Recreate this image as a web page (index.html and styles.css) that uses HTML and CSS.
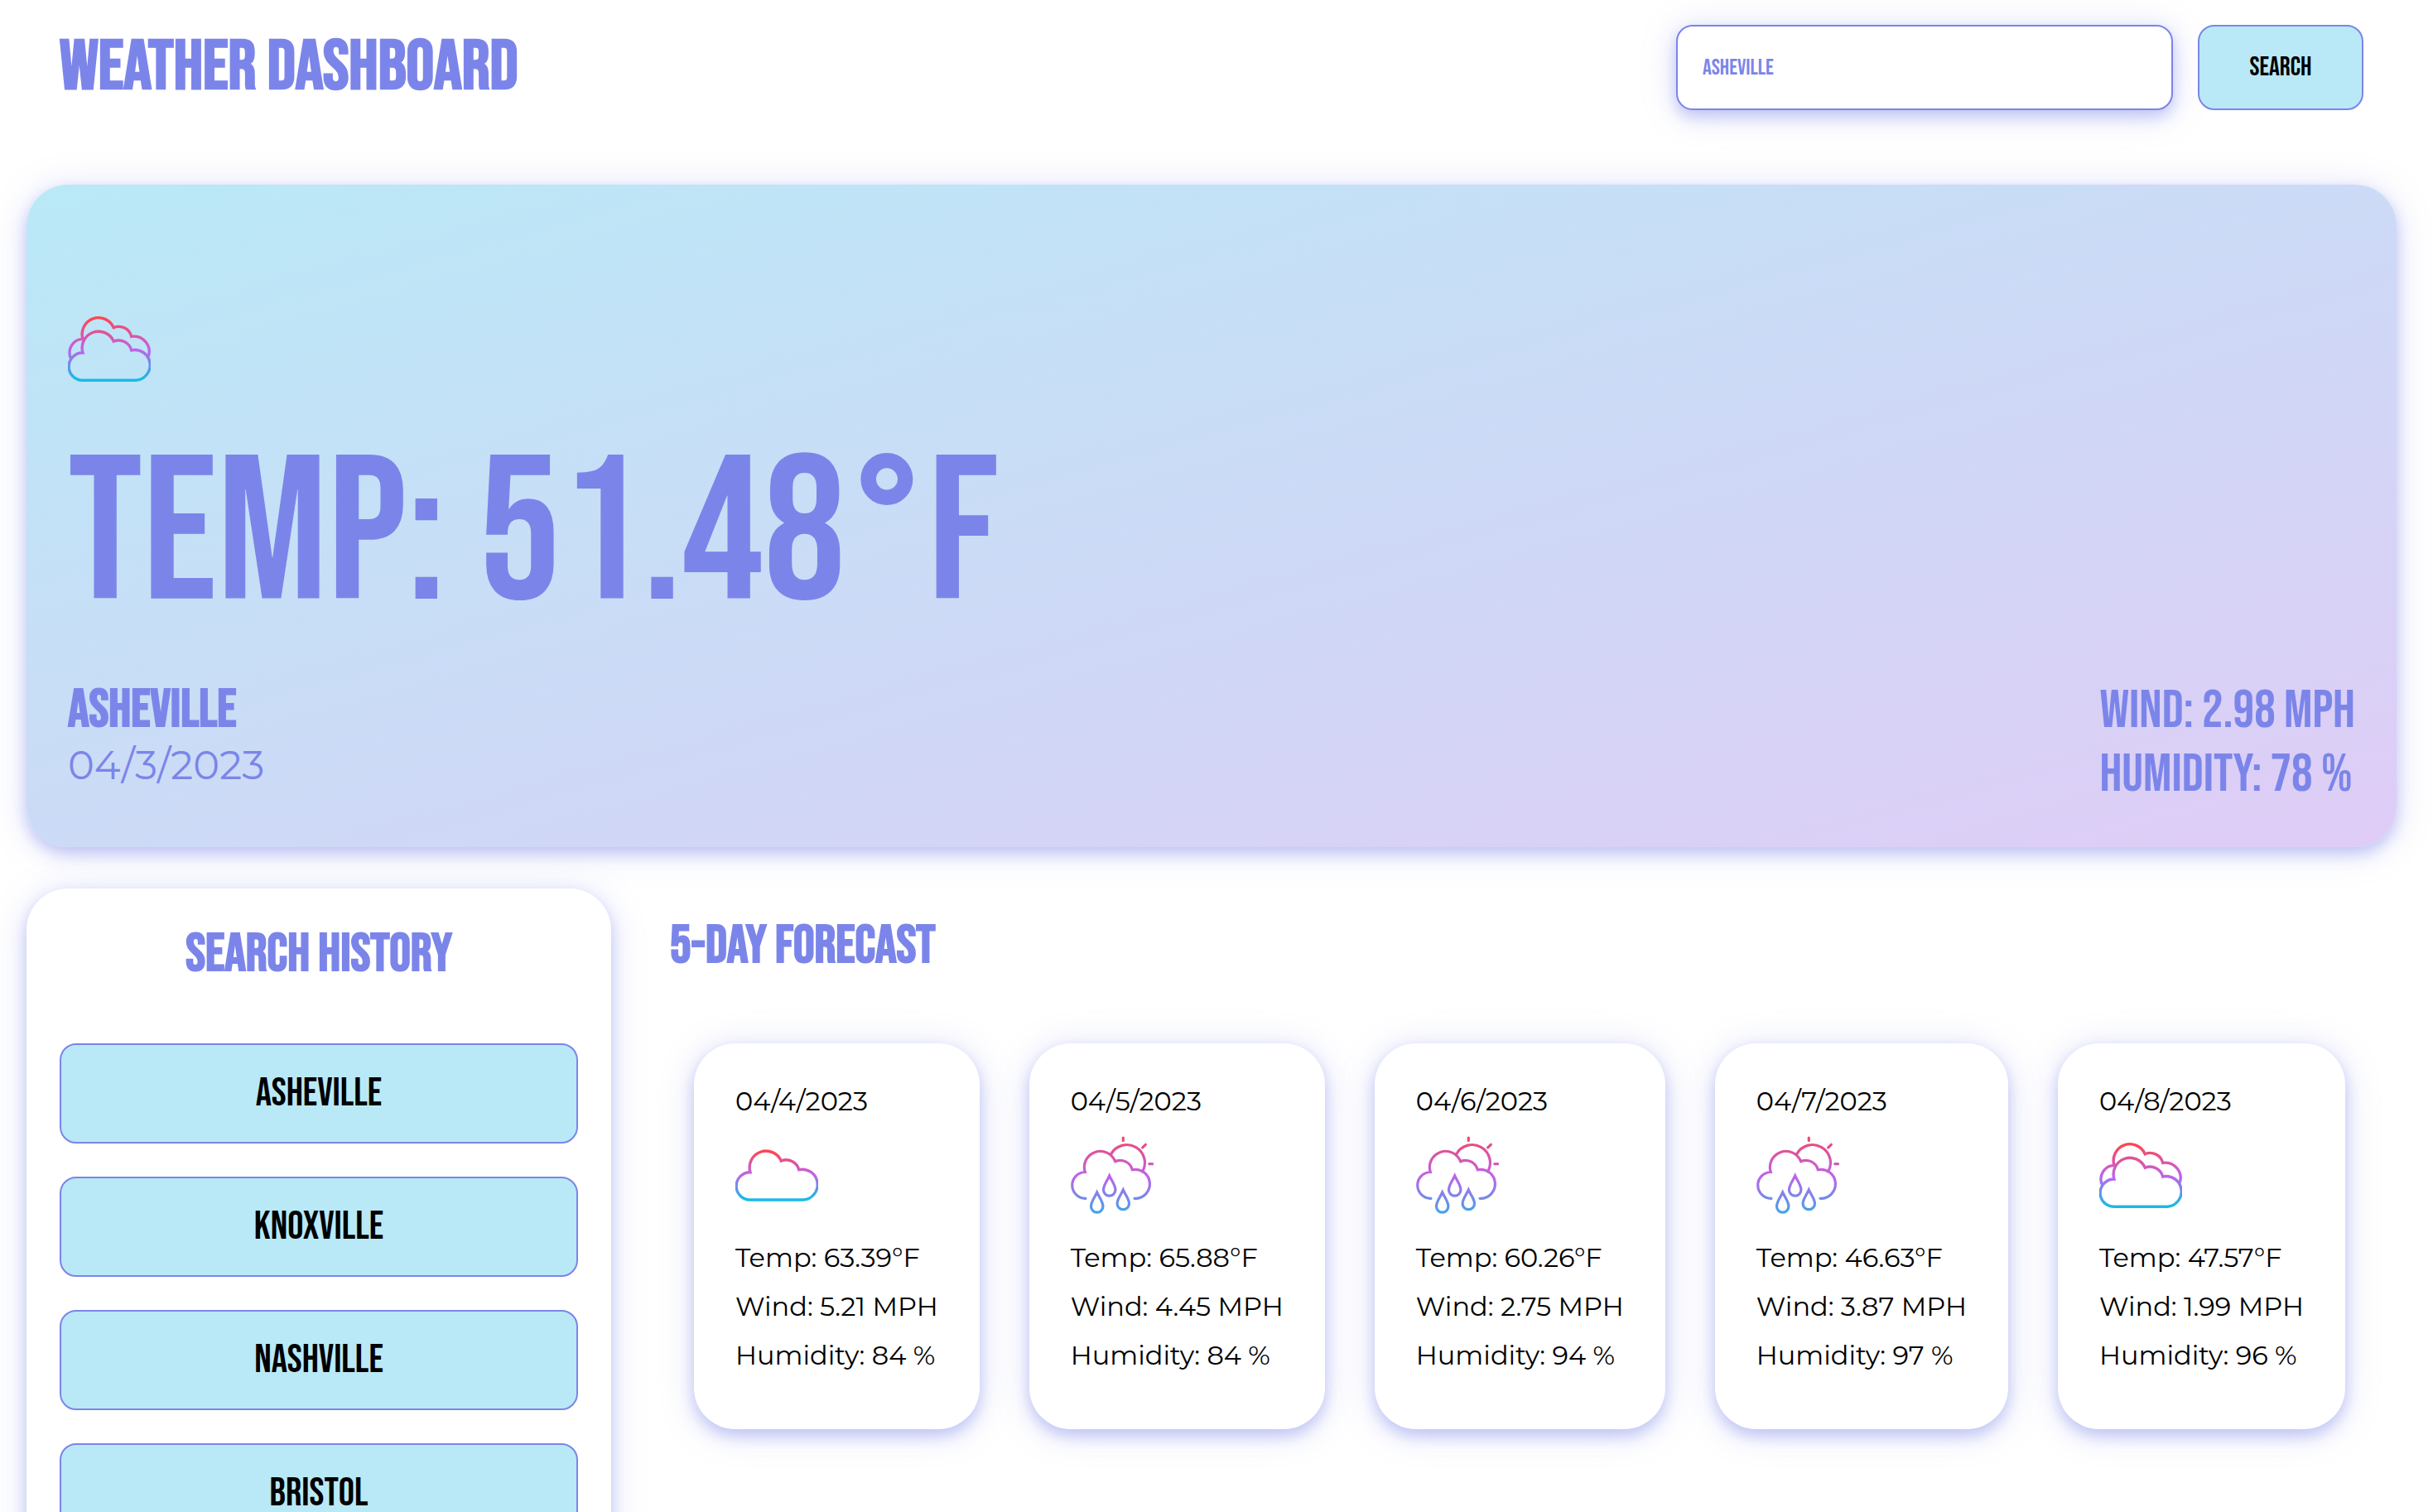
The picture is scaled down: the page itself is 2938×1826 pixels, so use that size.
FILE: index.html
```html
<!DOCTYPE html>
<html lang="en">
<head>
<meta charset="utf-8">
<title>Weather Dashboard</title>
<link rel="stylesheet" href="styles.css">
</head>
<body>
<svg class="sprite" aria-hidden="true">
  <defs>
    <linearGradient id="cloud-ink" gradientUnits="userSpaceOnUse" x1="0" y1="18" x2="0" y2="82">
      <stop offset="0.04" stop-color="#ff4550"/><stop offset="0.5" stop-color="#be63ec"/><stop offset="0.94" stop-color="#1cb9e6"/>
    </linearGradient>
    <linearGradient id="clouds-ink" gradientUnits="userSpaceOnUse" x1="0" y1="10" x2="0" y2="90">
      <stop offset="0.04" stop-color="#ff4550"/><stop offset="0.52" stop-color="#be63ec"/><stop offset="0.95" stop-color="#1cb9e6"/>
    </linearGradient>
    <linearGradient id="rain-ink" gradientUnits="userSpaceOnUse" x1="0" y1="4" x2="0" y2="96">
      <stop offset="0" stop-color="#f04968"/><stop offset="0.52" stop-color="#be63ec"/><stop offset="1" stop-color="#42a4ea"/>
    </linearGradient>
  </defs>
  <symbol id="cloud" viewBox="0 0 100 100">
    <path fill="none" stroke="url(#cloud-ink)" stroke-width="3.4" d="M17.5 80A16.5 16.5 0 0 1 18 46.7A19.9 19.9 0 0 1 55.3 33A15.7 15.7 0 0 1 76.7 43.7A18.4 18.4 0 1 1 82 80Z"/>
  </symbol>
  <symbol id="clouds" viewBox="0 0 100 100">
    <path fill="none" stroke="url(#clouds-ink)" stroke-width="3.4" d="M17.5 88.3A16.5 16.5 0 0 1 18 55A19.9 19.9 0 0 1 55.3 41.3A15.7 15.7 0 0 1 76.7 52A18.4 18.4 0 1 1 82 88.3ZM3.5 61.7A16.5 16.5 0 0 1 18 38.4A19.9 19.9 0 0 1 55.3 24.7A15.7 15.7 0 0 1 76.7 35.4A18.4 18.4 0 0 1 96.5 61"/>
  </symbol>
  <symbol id="rain" viewBox="0 0 100 100">
    <path fill="none" stroke="url(#rain-ink)" stroke-width="3.2" stroke-linecap="round" d="M18 78.3A15.9 15.9 0 0 1 17.3 46.5A19.3 19.3 0 0 1 53.7 33.7A15 15 0 0 1 74.3 43.7A17.5 17.5 0 1 1 77 78.3M48.7 24.7A21.7 21.7 0 0 1 86.7 46M63.3 5V8.5M86.7 16.8L90.3 13.3M94.8 36.7H98.5M46.7 51C44 57 39.5 62 39.5 68a7.2 7.2 0 0 0 14.4 0C53.9 62 49.4 57 46.7 51ZM31.7 71C29 77 24.5 82 24.5 88a7.2 7.2 0 0 0 14.4 0C38.9 82 34.4 77 31.7 71ZM63.3 68C60.6 74 56.1 79 56.1 84.5a7.2 7.2 0 0 0 14.4 0C70.5 79 66 74 63.3 68Z"/>
  </symbol>
</svg>

<header class="topbar">
  <h1 class="brand">WEATHER DASHBOARD</h1>
  <form class="search">
    <input class="search-box" type="text" aria-label="City" placeholder="ASHEVILLE">
    <button class="button search-button" type="button">SEARCH</button>
  </form>
</header>

<main>
  <section class="current">
    <svg class="icon" role="img" aria-label="Overcast"><use href="#clouds"/></svg>
    <p class="current-temp">TEMP: 51.48°F</p>
    <div class="current-foot">
      <div>
        <h2 class="heading">ASHEVILLE</h2>
        <p class="current-date">04/3/2023</p>
      </div>
      <div class="current-stats">
        <p>WIND: 2.98 MPH</p>
        <p>HUMIDITY: 78 %</p>
      </div>
    </div>
  </section>

  <div class="columns">
    <aside class="history">
      <h2 class="heading">SEARCH HISTORY</h2>
      <div class="history-list">
        <button class="button history-button" type="button">ASHEVILLE</button>
        <button class="button history-button" type="button">KNOXVILLE</button>
        <button class="button history-button" type="button">NASHVILLE</button>
        <button class="button history-button" type="button">BRISTOL</button>
      </div>
    </aside>

    <section class="forecast">
      <h2 class="heading">5-DAY FORECAST</h2>
      <div class="days">
        <article class="day">
          <p>04/4/2023</p>
          <svg class="icon" role="img" aria-label="Cloudy"><use href="#cloud"/></svg>
          <p>Temp: 63.39°F</p><p>Wind: 5.21 MPH</p><p>Humidity: 84 %</p>
        </article>
        <article class="day">
          <p>04/5/2023</p>
          <svg class="icon" role="img" aria-label="Rain"><use href="#rain"/></svg>
          <p>Temp: 65.88°F</p><p>Wind: 4.45 MPH</p><p>Humidity: 84 %</p>
        </article>
        <article class="day">
          <p>04/6/2023</p>
          <svg class="icon" role="img" aria-label="Rain"><use href="#rain"/></svg>
          <p>Temp: 60.26°F</p><p>Wind: 2.75 MPH</p><p>Humidity: 94 %</p>
        </article>
        <article class="day">
          <p>04/7/2023</p>
          <svg class="icon" role="img" aria-label="Rain"><use href="#rain"/></svg>
          <p>Temp: 46.63°F</p><p>Wind: 3.87 MPH</p><p>Humidity: 97 %</p>
        </article>
        <article class="day">
          <p>04/8/2023</p>
          <svg class="icon" role="img" aria-label="Overcast"><use href="#clouds"/></svg>
          <p>Temp: 47.57°F</p><p>Wind: 1.99 MPH</p><p>Humidity: 96 %</p>
        </article>
      </div>
    </section>
  </div>
</main>
</body>
</html>
```
FILE: styles.css
```css
:root {
  --accent: #7b85e9;
  --sky: #b9e9f7;
  --display: "Bebas Neue", "Liberation Sans Narrow", "Arial Narrow", "DejaVu Sans Condensed", sans-serif;
  --body: "Montserrat", "Inter", sans-serif;
  --shadow: 0 8px 18px rgba(123, 133, 233, 0.4), 0 4px 44px rgba(123, 133, 233, 0.22);
}
* { box-sizing: border-box; }
body { margin: 0; background: #fff; color: #000; font-family: var(--body); font-size: 32px; }
h1, h2, p { margin: 0; }
.sprite { position: absolute; width: 0; height: 0; }
.icon { display: block; width: 100px; height: 100px; }

.topbar { display: flex; justify-content: space-between; align-items: center; padding: 30px 84px 0 72px; }
.brand { font: bold 84px/103px var(--display); color: var(--accent); }
.search { display: flex; gap: 30px; height: 103px; }
.search-box { width: 600px; padding: 0 30px; border: 2px solid var(--accent); border-radius: 20px; background: #fff; box-shadow: var(--shadow); font: 27px var(--display); color: var(--accent); }
.search-box::placeholder { color: var(--accent); opacity: 1; }
.button { border: 2px solid var(--accent); border-radius: 20px; background: var(--sky); color: #000; font-family: var(--display); font-weight: normal; }
.search-button { width: 200px; font-size: 32px; }

main { margin: 90px 44px 0 32px; }
.current { padding: 148px 50px 49px; border-radius: 50px; background: linear-gradient(to bottom right, #b9e9f7, #dfccf6); box-shadow: var(--shadow); color: var(--accent); }
.current-temp { margin-top: 46px; font: 248px/264px var(--display); }
.current-foot { display: flex; justify-content: space-between; margin-top: 39px; }
.heading { font: bold 64px/76px var(--display); color: var(--accent); }
.current-date { font-size: 48px; line-height: 56px; }
.current-stats { font: 64px/77px var(--display); }

.columns { display: flex; gap: 71px; margin-top: 50px; }
.history { width: 706px; padding: 42px 40px 80px; border-radius: 50px; background: #fff; box-shadow: var(--shadow); }
.history .heading { text-align: center; }
.history-list { display: grid; gap: 40px; margin-top: 69px; }
.history-button { height: 121px; font-size: 48px; line-height: 40px; }
.forecast { flex: 1; padding-top: 32px; }
.days { display: flex; gap: 60px; margin: 79px 62px 0 29px; }
.day { flex: 1 1 auto; padding: 40px 50px 60px; border-radius: 50px; background: #fff; box-shadow: var(--shadow); line-height: 59px; white-space: nowrap; }
.day .icon { margin: 10px 0 20px; }
```
